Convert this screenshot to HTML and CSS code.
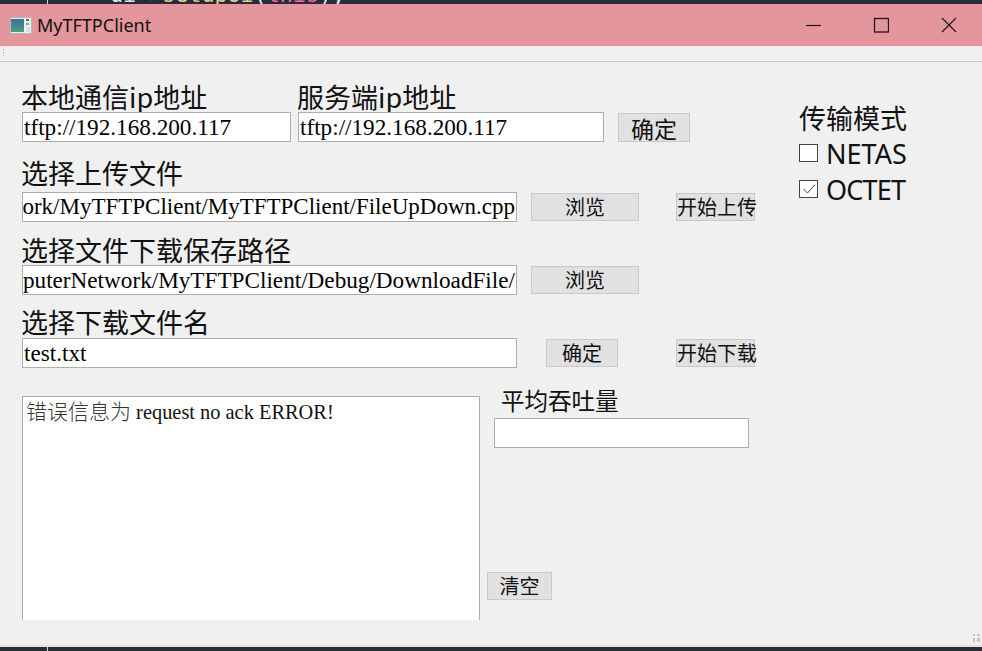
FILE: index.html
```html
<!DOCTYPE html>
<html lang="zh">
<head>
<meta charset="utf-8">
<title>MyTFTPClient</title>
<link rel="stylesheet" href="styles.css">
</head>
<body>
<div class="screen">
  <div class="editor-top"><span class="gutter-line"></span><code class="code"><span class="c-white">ui</span><span class="c-pink">-&gt;</span><span class="c-yellow">setupUi</span><span class="c-white">(</span><span class="c-pink">this</span><span class="c-white">);</span></code></div>
  <div class="window">
    <header class="titlebar">
      <svg class="app-icon" width="22" height="17" viewBox="0 0 22 17"><defs><linearGradient id="pane" x1="0" y1="0" x2="0" y2="1"><stop offset="0" stop-color="#3d6f9a"/><stop offset="1" stop-color="#4fa07a"/></linearGradient></defs><rect x="0.5" y="0.5" width="21" height="16" fill="#eeeeee" stroke="#b5b5b5"/><rect x="1" y="2" width="13" height="13" fill="url(#pane)"/><rect x="16" y="2" width="3" height="2" fill="#666"/><rect x="16" y="6" width="3" height="2" fill="#7aa"/><rect x="16" y="10" width="4" height="5" fill="#d8dfdc"/></svg>
      <span class="title">MyTFTPClient</span>
      <div class="win-controls">
        <svg class="win-btn" width="16" height="16" viewBox="0 0 16 16"><path d="M1 8.5H16" stroke="#1a1a1a" stroke-width="1.2"/></svg>
        <svg class="win-btn" width="16" height="16" viewBox="0 0 16 16"><rect x="1.5" y="1.5" width="14" height="13.5" fill="none" stroke="#1a1a1a" stroke-width="1.3"/></svg>
        <svg class="win-btn" width="16" height="16" viewBox="0 0 16 16"><path d="M1 1L15 15M15 1L1 15" stroke="#1a1a1a" stroke-width="1.2"/></svg>
      </div>
    </header>
    <div class="toolbar"><span class="grip"></span></div>
    <main class="client">
      <div class="form">
        <div class="ip-row">
          <div class="field field-local">
            <label class="label">本地通信ip地址</label>
            <input class="input" value="tftp://192.168.200.117">
          </div>
          <div class="field field-server">
            <label class="label">服务端ip地址</label>
            <input class="input" value="tftp://192.168.200.117">
          </div>
          <button class="btn btn-ok-top">确定</button>
        </div>

        <label class="label label-upload">选择上传文件</label>
        <div class="row">
          <div class="input input-wide input-end input-tight"><span>ork/MyTFTPClient/MyTFTPClient/FileUpDown.cpp</span></div>
          <button class="btn btn-browse">浏览</button>
          <button class="btn btn-start">开始上传</button>
        </div>

        <label class="label label-save">选择文件下载保存路径</label>
        <div class="row">
          <div class="input input-wide input-end"><span>mputerNetwork/MyTFTPClient/Debug/DownloadFile/</span></div>
          <button class="btn btn-browse">浏览</button>
        </div>

        <label class="label label-name">选择下载文件名</label>
        <div class="row">
          <input class="input input-wide" value="test.txt">
          <button class="btn btn-ok">确定</button>
          <button class="btn btn-start btn-start-down">开始下载</button>
        </div>

        <div class="lower">
          <div class="log"><span class="log-cjk">错误信息为</span> request no ack ERROR!</div>
          <div class="side">
            <label class="label label-rate">平均吞吐量</label>
            <input class="input input-rate">
            <button class="btn btn-clear">清空</button>
          </div>
        </div>
      </div>

      <aside class="mode">
        <div class="label mode-title">传输模式</div>
        <div class="check"><span class="box"></span>NETAS</div>
        <div class="check check-octet"><span class="box"><svg width="16" height="16" viewBox="0 0 16 16"><path d="M2.5 8L6.5 12L13.5 4" fill="none" stroke="#444" stroke-width="1"/></svg></span>OCTET</div>
      </aside>
      <svg class="size-grip" width="7" height="8" viewBox="0 0 7 8"><path d="M0 0h2v2H0zM4 0h3v2H4zM0 4h2v4H0zM4 4h3v4H4z" fill="#c4c4c4"/></svg>
    </main>
  </div>
  <div class="editor-bottom"><span class="gutter-line"></span></div>
</div>
</body>
</html>
```
FILE: styles.css
```css
* { box-sizing: border-box; }
html, body { margin: 0; padding: 0; }
body { width: 982px; height: 651px; overflow: hidden; background: #f0f0f0; }
.screen { width: 982px; height: 651px; display: flex; flex-direction: column; }

.editor-top { height: 4px; flex: none; background: #2b2a38; overflow: hidden; display: flex; }
.gutter-line { width: 1px; margin-left: 47px; background: #cfcfcf; flex: none; }
.code { margin: -16px 0 0 62px; font: 21.7px/22px "DejaVu Sans Mono", monospace; white-space: pre; }
.c-pink { color: #e86bb8; }
.c-yellow { color: #d9d08a; }
.c-white { color: #e6e6e6; }

.window { flex: 1; display: flex; flex-direction: column; min-height: 0; }
.titlebar { height: 42px; flex: none; background: #e5959c; display: flex; align-items: center; padding-left: 10px; }
.app-icon { flex: none; }
.title { margin-left: 5px; font: 18px "Noto Sans", sans-serif; color: #111; }
.win-controls { margin-left: auto; display: flex; gap: 52px; padding-right: 25px; }
.win-btn { display: block; }

.toolbar { height: 16px; flex: none; border-bottom: 1px solid #c8c8c8; background: #f0f0f0; padding: 3px 0 0 3px; }
.grip { display: block; width: 1px; height: 7px; background: repeating-linear-gradient(#aaa 0 1px, transparent 1px 3px); }

.client { flex: 1; min-height: 0; display: flex; background: #f0f0f0; position: relative; padding-left: 22px; border-bottom: 2px solid #f3d9dc; }
.form { width: 777px; flex: none; font-family: "Noto Sans CJK SC", sans-serif; }
.label { display: block; margin-left: -1px; font: 27px/30px "Noto Sans CJK SC", sans-serif; color: #111; white-space: nowrap; }

.ip-row { display: flex; align-items: flex-end; margin-top: 20px; }
.field { display: flex; flex-direction: column; }
.field-local { width: 269px; }
.field-server { width: 306px; margin-left: 7px; margin-right: 14px; }
.input { display: block; height: 30px; width: 100%; background: #fff; border: 1px solid #adadad; padding: 0 1px; font: 23.2px/28px "Liberation Serif", serif; color: #000; outline: none; margin: 0; }
.input-wide { width: 495px; flex: none; }
.input-end { display: flex; justify-content: flex-end; overflow: hidden; white-space: nowrap; }
.input-tight { font-size: 23px; }

.btn { height: 29px; padding: 0; background: #e1e1e1; border: 1px solid #c9c9c9; border-radius: 0; font: 20px/26px "Noto Sans CJK SC", sans-serif; color: #111; flex: none; white-space: nowrap; }
.btn-ok-top { width: 72px; font-size: 23px; }

.row { display: flex; align-items: center; }
.btn-browse { width: 108px; height: 28px; margin-left: 14px; }
.btn-start { width: 79px; height: 28px; margin-left: 37px; }
.btn-ok { width: 72px; height: 28px; margin-left: 29px; }
.btn-start-down { margin-left: 58px; }

.label-upload { margin-top: 16px; margin-bottom: 4px; }
.label-save { margin-top: 13px; }
.label-name { margin-top: 12px; margin-bottom: 1px; }

.lower { display: flex; margin-top: 28px; }
.log { width: 458px; height: 224px; background: #fff; border: 1px solid #adadad; border-bottom: none; padding: 1px 3px; font: 20.4px/24px "Liberation Serif", serif; color: #111; white-space: nowrap; }
.log-cjk { font: 300 21px/24px "Noto Sans CJK SC", serif; color: #333; }
.side { flex: 1; display: flex; flex-direction: column; align-items: flex-start; padding-left: 14px; margin-top: -10px; }
.label-rate { font-size: 23.5px; line-height: 28px; margin-left: 7px; }
.input-rate { width: 255px; margin-top: 4px; height: 30px; }
.btn-clear { width: 65px; height: 28px; margin: 124px 0 0 -7px; }

.mode { padding-top: 41px; }
.mode-title { margin-left: 0; margin-bottom: 2px; }
.check { display: flex; align-items: center; height: 36px; font: 27px "Noto Sans", sans-serif; color: #111; }
.check-octet { letter-spacing: -0.8px; }
.box { width: 19px; height: 18px; border: 1px solid #444; background: #fff; margin-right: 8px; display: flex; align-items: center; justify-content: center; flex: none; }
.box svg { display: block; }
.size-grip { position: absolute; right: 2px; bottom: 3px; }

.editor-bottom { height: 4px; flex: none; background: #2b2a38; display: flex; }
```
